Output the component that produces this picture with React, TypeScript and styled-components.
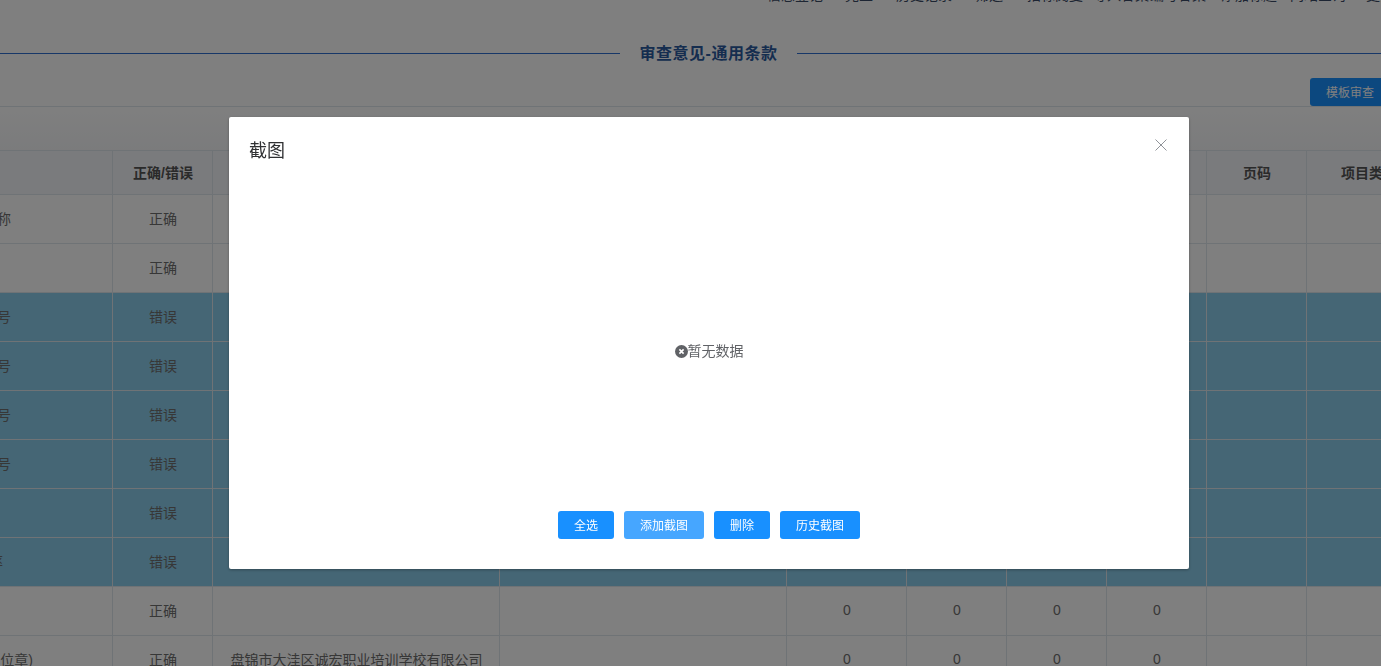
import React from "react";
import styled, { createGlobalStyle } from "styled-components";

const Global = createGlobalStyle`
  html, body { margin: 0; padding: 0; height: 100%; overflow: hidden; background: #fff; }
  body { font-family: "Microsoft YaHei", "Liberation Sans", "Noto Sans CJK SC", sans-serif; color: #333; font-size: 14px; }
`;

const Page = styled.div`
  width: 1381px;
  height: 666px;
  overflow: hidden;
`;
const Nav = styled.nav`
  display: flex;
  height: 5px;
  padding-left: 767px;
  white-space: nowrap;
  font-size: 14px;
  line-height: 20px;
  color: #3a4a66;
  margin-top: -15px;
  padding-bottom: 10px;
`;
const NavItem = styled.span<{ $gap: number }>`
  margin-right: ${(p) => p.$gap}px;
  flex: none;
`;
const Heading = styled.div`
  display: flex;
  align-items: center;
  height: 36px;
  margin-top: 35px;
  margin-right: -36px;
`;
const Rule = styled.div`
  flex: 1;
  height: 1px;
  background: #2f6ed0;
`;
const HeadingText = styled.h2`
  margin: 2px 20px 0;
  font-size: 16px;
  font-weight: 700;
  letter-spacing: 0.5px;
  line-height: 34px;
  color: #2b5a9e;
`;
const Toolbar = styled.div`
  display: flex;
  justify-content: flex-end;
  height: 28px;
  margin-top: 7px;
  margin-right: -65px;
`;
const TemplateButton = styled.button`
  width: 136px;
  height: 28px;
  text-align: left;
  padding: 0 0 1px 16px;
  border: 0;
  border-radius: 3px;
  background: #1890ff;
  color: #fff;
  font: inherit;
  font-size: 12px;
`;
const Band = styled.div`
  height: 43px;
  border-top: 1px solid #dfe6ec;
  background: linear-gradient(#ffffff, #f6f7f9);
`;
const Table = styled.table`
  border-collapse: collapse;
  table-layout: fixed;
  width: 1531px;
  margin-left: -101px;
`;
const Th = styled.th`
  height: 44px;
  padding: 0 0 2px 1px;
  box-sizing: border-box;
  border: 1px solid #dfe6ec;
  background: #f5f7fa;
  font-size: 14px;
  font-weight: 700;
  color: #555;
  text-align: center;
  white-space: nowrap;
  overflow: hidden;
`;
const Tr = styled.tr<{ $wrong?: boolean }>`
  background: ${(p) => (p.$wrong ? "#8accea" : "#fff")};
`;
const Td = styled.td`
  height: 49px;
  padding: 0 0 2px 1px;
  box-sizing: border-box;
  border: 1px solid #dfe6ec;
  font-size: 14px;
  color: #6e6e6e;
  text-align: center;
  white-space: nowrap;
  overflow: hidden;
`;
const FirstCell = styled(Td)<{ $inset: number }>`
  direction: rtl;
  text-align: right;
  padding-right: ${(p) => p.$inset}px;
`;
const Mask = styled.div`
  position: fixed;
  inset: 0;
  background: rgba(0, 0, 0, 0.5);
`;
const Dialog = styled.section`
  position: fixed;
  z-index: 2;
  left: 229px;
  top: 117px;
  width: 960px;
  height: 452px;
  display: flex;
  flex-direction: column;
  background: #fff;
  border-radius: 2px;
  box-shadow: 0 1px 3px rgba(0, 0, 0, 0.3);
`;
const DialogHeader = styled.header`
  display: flex;
  justify-content: space-between;
  padding: 22px 20px 10px;
`;
const DialogTitle = styled.span`
  font-size: 18px;
  line-height: 24px;
  color: #303133;
`;
const Close = styled.button`
  width: 16px;
  height: 16px;
  padding: 0;
  border: 0;
  background: none;
  color: #909399;
  margin: -2px 0 0 0;
  display: flex;
`;
const DialogBody = styled.div`
  flex: 1;
  display: flex;
  align-items: center;
  justify-content: center;
  padding-top: 18px;
`;
const Empty = styled.div`
  display: flex;
  align-items: center;
  font-size: 14px;
  line-height: 20px;
  color: #606266;
`;
const EmptyIcon = styled.svg`
  width: 13px;
  height: 13px;
  flex: none;
`;
const DialogFooter = styled.footer`
  display: flex;
  justify-content: center;
  gap: 10px;
  padding-bottom: 30px;
`;
const ActionButton = styled.button<{ $hover?: boolean }>`
  height: 28px;
  padding: 0 16px 2px;
  border: 0;
  border-radius: 3px;
  background: ${(p) => (p.$hover ? "#46a6ff" : "#1890ff")};
  color: #fff;
  font: inherit;
  font-size: 12px;
`;

const navItems: [string, number][] = [
  ["信息登记", 22],
  ["完工", 23],
  ["历史记录", 23],
  ["筛选", 24],
  ["招标阅复", 10],
  ["导入答案", 1],
  ["编写答案", 15],
  ["添加标题", 13],
  ["网站查询", 20],
  ["更多", 0],
];

const widths = [213, 100, 287, 287, 120, 100, 100, 100, 100, 124];

const rows: { first: string; inset: number; ok: boolean; company?: string; zeros?: boolean }[] = [
  { first: "投标人名称", inset: 101, ok: true },
  { first: "", inset: 0, ok: true },
  { first: "证书编号", inset: 101, ok: false },
  { first: "证书编号", inset: 101, ok: false },
  { first: "证书编号", inset: 101, ok: false },
  { first: "证书编号", inset: 101, ok: false },
  { first: "", inset: 0, ok: false },
  { first: "费率", inset: 109, ok: false },
  { first: "", inset: 0, ok: true, zeros: true },
  { first: "投标人(单位章)", inset: 79, ok: true, company: "盘锦市大洼区诚宏职业培训学校有限公司", zeros: true },
];

export default function App() {
  return (
    <Page>
      <Global />
      <Nav>
        {navItems.map(([t, g]) => (
          <NavItem key={t} $gap={g}>{t}</NavItem>
        ))}
      </Nav>
      <Heading>
        <Rule />
        <HeadingText>审查意见-通用条款</HeadingText>
        <Rule />
      </Heading>
      <Toolbar>
        <TemplateButton>模板审查</TemplateButton>
      </Toolbar>
      <Band />
      <Table>
        <colgroup>
          {widths.map((w, i) => (
            <col key={i} style={{ width: w }} />
          ))}
        </colgroup>
        <thead>
          <tr>
            <Th />
            <Th>正确/错误</Th>
            <Th>内容</Th>
            <Th>标准</Th>
            <Th>分值</Th>
            <Th>得分</Th>
            <Th>扣分</Th>
            <Th>合计</Th>
            <Th>页码</Th>
            <Th>项目类型</Th>
          </tr>
        </thead>
        <tbody>
          {rows.map((r, i) => (
            <Tr key={i} $wrong={!r.ok}>
              <FirstCell $inset={r.inset}><bdi>{r.first}</bdi></FirstCell>
              <Td>{r.ok ? "正确" : "错误"}</Td>
              <Td>{r.company ?? ""}</Td>
              <Td />
              <Td>{r.zeros ? 0 : ""}</Td>
              <Td>{r.zeros ? 0 : ""}</Td>
              <Td>{r.zeros ? 0 : ""}</Td>
              <Td>{r.zeros ? 0 : ""}</Td>
              <Td />
              <Td />
            </Tr>
          ))}
        </tbody>
      </Table>
      <Mask />
      <Dialog>
        <DialogHeader>
          <DialogTitle>截图</DialogTitle>
          <Close aria-label="关闭">
            <svg width="16" height="16" viewBox="0 0 16 16" fill="none" stroke="currentColor" strokeWidth="1">
              <path d="M2.5 2.5l11 11M13.5 2.5l-11 11" />
            </svg>
          </Close>
        </DialogHeader>
        <DialogBody>
          <Empty>
            <EmptyIcon viewBox="0 0 13 13">
              <circle cx="6.5" cy="6.5" r="6.5" fill="#606266" />
              <path d="M4.4 4.4l4.2 4.2M8.6 4.4l-4.2 4.2" stroke="#fff" strokeWidth="1.6" />
            </EmptyIcon>
            暂无数据
          </Empty>
        </DialogBody>
        <DialogFooter>
          <ActionButton>全选</ActionButton>
          <ActionButton $hover>添加截图</ActionButton>
          <ActionButton>删除</ActionButton>
          <ActionButton>历史截图</ActionButton>
        </DialogFooter>
      </Dialog>
    </Page>
  );
}
